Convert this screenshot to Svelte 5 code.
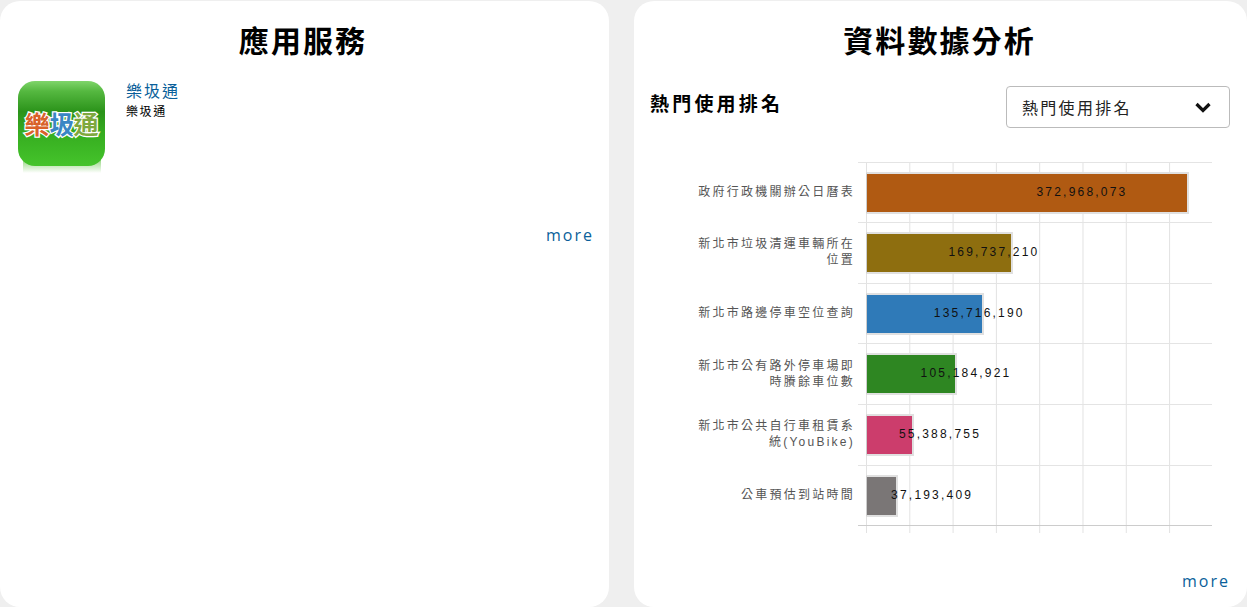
<script lang="ts">
  const maxValue = 372968073;
  const maxWidth = 323;
  const rows = [
    { label: "政府行政機關辦公日曆表", value: 372968073, color: "#b05a12" },
    { label: "新北市垃圾清運車輛所在位置", value: 169737210, color: "#8e6e0f" },
    { label: "新北市路邊停車空位查詢", value: 135716190, color: "#2f7ab8" },
    { label: "新北市公有路外停車場即時賸餘車位數", value: 105184921, color: "#2e8622" },
    { label: "新北市公共自行車租賃系統(YouBike)", value: 55388755, color: "#cc3d6c" },
    { label: "公車預估到站時間", value: 37193409, color: "#7a7676" },
  ];
</script>

<div class="page">
  <section class="card left">
    <h2>應用服務</h2>
    <div class="app-item">
      <svg class="app-icon" width="90" height="94" viewBox="0 0 90 94">
        <defs>
          <linearGradient id="base" x1="0" y1="0" x2="0" y2="1">
            <stop offset="0" stop-color="#7fd56a" />
            <stop offset="0.12" stop-color="#55b840" />
            <stop offset="0.36" stop-color="#2b931a" />
            <stop offset="0.62" stop-color="#36ad20" />
            <stop offset="1" stop-color="#45c42b" />
          </linearGradient>
          <linearGradient id="reflect" x1="0" y1="0" x2="0" y2="1">
            <stop offset="0" stop-color="#9bd888" />
            <stop offset="1" stop-color="#ffffff" />
          </linearGradient>
        </defs>
        <rect x="6" y="80" width="78" height="13" fill="url(#reflect)" />
        <rect x="1" y="1" width="87" height="85" rx="17" fill="url(#base)" />
        <g class="logo" text-anchor="middle">
          <text x="20" y="54" fill="#d9622a">樂</text>
          <text x="45" y="54" fill="#3a86c4">圾</text>
          <text x="69" y="54" fill="#7fa83e">通</text>
        </g>
      </svg>
      <div class="app-text">
        <a class="app-name" href="#top">樂圾通</a>
        <p>樂圾通</p>
      </div>
    </div>
    <a class="more" href="#top">more</a>
  </section>

  <section class="card right">
    <h2>資料數據分析</h2>
    <div class="toolbar">
      <h3>熱門使用排名</h3>
      <div class="select">
        <span>熱門使用排名</span>
        <svg width="16" height="11" viewBox="0 0 16 11">
          <path d="M1.5 2 L8 8.5 L14.5 2" fill="none" stroke="#111" stroke-width="3.2" />
        </svg>
      </div>
    </div>
    <div class="chart">
      {#each rows as row}
        <div class="row">
          <div class="row-label">{row.label}</div>
          <div class="track">
            <div
              class="bar"
              style="width: {(row.value / maxValue) * maxWidth}px; background: {row.color}"
            >
              <span class="value">{row.value.toLocaleString("en-US")}</span>
            </div>
          </div>
        </div>
      {/each}
      <div class="row axis">
        <div class="row-label"></div>
        <div class="track"></div>
      </div>
    </div>
    <a class="more bottom" href="#top">more</a>
  </section>
</div>

<style>
  :global(body) {
    background: #efefef;
    overflow: hidden;
  }

  .page {
    display: flex;
    gap: 25px;
    padding-top: 1px;
    height: 606px;
    font-family: "Noto Sans CJK TC", "Noto Sans", sans-serif;
  }

  .card {
    background: #fff;
    border-radius: 20px;
    display: flex;
    flex-direction: column;
    box-sizing: border-box;
  }

  .left {
    width: 609px;
    padding: 0 15px 0 18px;
  }

  .right {
    width: 613px;
    padding: 0 17px 0 16px;
  }

  h2 {
    margin: 15px 0 0;
    font-size: 30px;
    line-height: 47px;
    font-weight: 700;
    letter-spacing: 2.1px;
    text-align: center;
    color: #000;
  }

  .left h2 {
    padding-right: 6px;
  }

  .right h2 {
    padding-right: 1px;
  }

  .app-item {
    display: flex;
    gap: 19px;
    margin-top: 17px;
    height: 132px;
  }

  .app-icon {
    flex: none;
    margin-left: -1px;
  }

  .logo {
    font-size: 25px;
    font-weight: 700;
    stroke: #fff;
    stroke-width: 2.5px;
    paint-order: stroke;
  }

  .app-text {
    display: flex;
    flex-direction: column;
  }

  .app-name {
    color: #0a5f9a;
    font-size: 16px;
    line-height: 20px;
    letter-spacing: 2px;
    text-decoration: none;
  }

  .app-text p {
    margin: 2px 0 0;
    font-size: 12px;
    line-height: 18px;
    letter-spacing: 1.6px;
    color: #000;
  }

  .more {
    align-self: flex-end;
    color: #0a5f9a;
    font-family: "Open Sans", sans-serif;
    font-size: 16px;
    line-height: 22px;
    letter-spacing: 2px;
    text-decoration: none;
  }

  .left .more {
    margin-top: 12px;
  }

  .toolbar {
    display: flex;
    justify-content: space-between;
    align-items: flex-start;
    margin-top: 23px;
  }

  h3 {
    margin: 2px 0 0;
    font-size: 19px;
    line-height: 30px;
    font-weight: 700;
    letter-spacing: 3.2px;
    color: #000;
  }

  .select {
    width: 224px;
    height: 42px;
    box-sizing: border-box;
    padding: 0 18px 0 15px;
    display: flex;
    align-items: center;
    justify-content: space-between;
    border: 1px solid #bbb;
    border-radius: 4px;
    font-size: 16px;
    letter-spacing: 2.3px;
    color: #222;
  }

  .chart {
    margin-top: 33.6px;
    display: flex;
    flex-direction: column;
  }

  .row {
    display: flex;
    height: 60.6px;
  }

  .row-label {
    width: 208px;
    padding: 0 3px 0 45px;
    box-sizing: border-box;
    align-self: center;
    text-align: right;
    font-size: 12px;
    line-height: 16px;
    letter-spacing: 2.25px;
    color: #555;
    font-family: "Liberation Sans", "Noto Sans CJK TC", sans-serif;
  }

  .track {
    width: 354px;
    box-sizing: border-box;
    padding: 9px 0 0 8px;
    border-top: 1px solid #e4e4e4;
    background-image: linear-gradient(90deg, #e2e2e2 1px, transparent 1px);
    background-size: 43.3px 100%;
    background-position: 8px 0;
  }

  .bar {
    height: 42px;
    box-sizing: border-box;
    border: 2px solid #e0e0e0;
    border-left: 1px solid #ccc;
    white-space: nowrap;
  }

  .value {
    display: block;
    margin-left: calc(50% + 9.5px);
    font-family: "Liberation Sans", sans-serif;
    font-size: 12px;
    line-height: 37px;
    letter-spacing: 2.2px;
    color: #111;
  }

  .axis {
    height: 8px;
  }

  .axis .track {
    border-top: 1px solid #ccc;
    padding: 0;
  }

  .bottom {
    margin-top: auto;
    margin-bottom: 15px;
  }
</style>
